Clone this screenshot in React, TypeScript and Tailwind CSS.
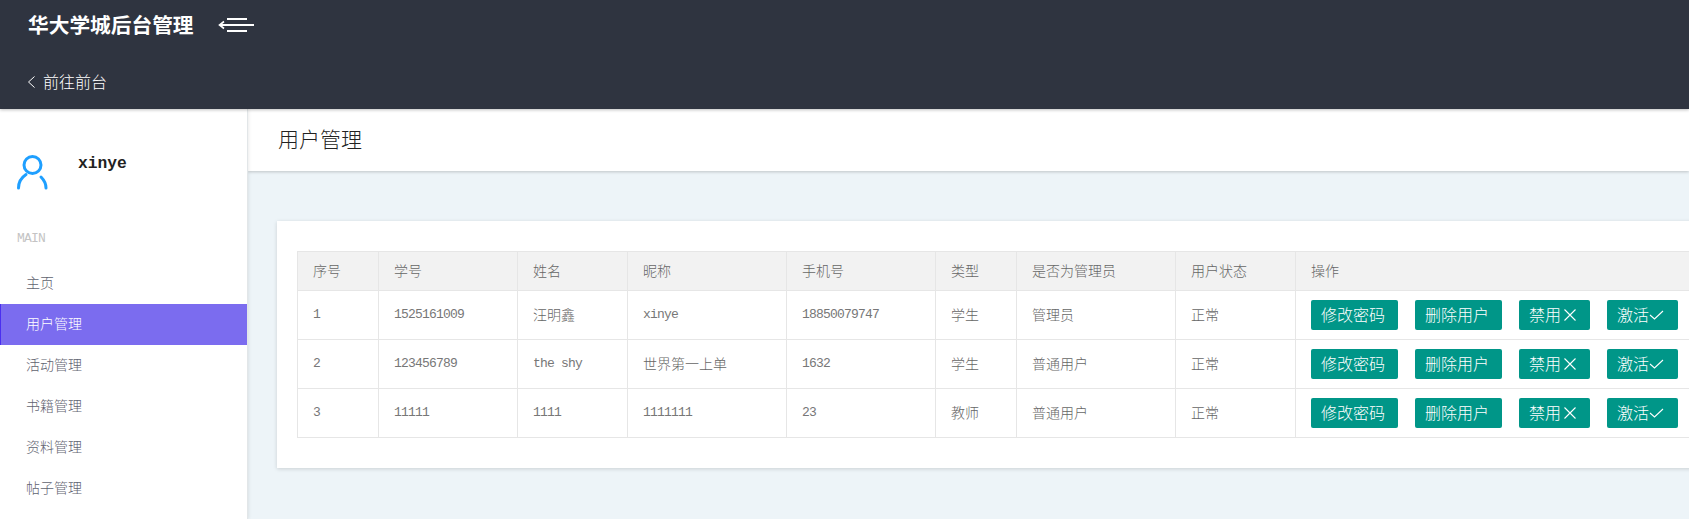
const headers = ["序号", "学号", "姓名", "昵称", "手机号", "类型", "是否为管理员", "用户状态", "操作"];
const widths = [81, 139, 110, 159, 149, 81, 159, 120, 480];
const rows = [
  ["1", "1525161009", "汪明鑫", "xinye", "18850079747", "学生", "管理员", "正常"],
  ["2", "123456789", "the shy", "世界第一上单", "1632", "学生", "普通用户", "正常"],
  ["3", "11111", "1111", "1111111", "23", "教师", "普通用户", "正常"],
];
const navItems = ["主页", "用户管理", "活动管理", "书籍管理", "资料管理", "帖子管理"];
const isLatin = (s: string) => /^[\x00-\x7f]+$/.test(s);
const cjk = "font-['Noto_Sans_CJK_SC','Liberation_Sans',sans-serif]";
const mono = "font-['Liberation_Mono','Noto_Sans_CJK_SC',monospace]";

function Btn({ w, label, children }: { w: string; label: string; children?: React.ReactNode }) {
  return (
    <button className={`${w} h-[30px] shrink-0 rounded-[2px] bg-[#009688] text-white text-[16px] font-light flex items-center justify-start pl-[10px] leading-none`}>
      <span className="mb-[2px]">{label}</span>
      {children}
    </button>
  );
}

export default function App() {
  return (
    <div className={`w-[1689px] h-[519px] overflow-hidden flex flex-col bg-white ${cjk}`}>
      <header className="h-[109px] shrink-0 bg-[#2f3440] text-white relative z-20 shadow-[0_1px_3px_rgba(0,0,0,0.25)]">
        <div className="h-[50px] flex items-center pl-[28px]">
          <span className="text-[20.7px] font-bold leading-none mb-[2px] font-['Noto_Sans_CJK_SC',serif]">华大学城后台管理</span>
          <svg className="ml-[24px]" width="36" height="16" viewBox="0 0 36 16" fill="none" stroke="white" strokeWidth="2">
            <path d="M9 2h20M2 8h34M9 14h20" />
            <path d="M6 4.5L1.5 8L6 11.5" strokeWidth="1.6" />
          </svg>
        </div>
        <div className="mt-[8px] h-[48px] flex items-center pl-[27px] text-[16px] font-light">
          <svg width="9" height="14" viewBox="0 0 9 14" fill="none" stroke="white" strokeWidth="1"><path d="M7.5 1.5L1.5 7l6 5.5" /></svg>
          <span className="ml-[7px] mb-[2px]">前往前台</span>
        </div>
      </header>
      <div className="flex flex-1 min-h-0">
        <aside className="w-[248px] shrink-0 bg-white border-r border-[#e2e6e8] pt-[46px] relative z-10 shadow-[1px_0_3px_rgba(0,0,0,0.08)]">
          <div className="flex h-[34px] pl-[17px]">
            <svg width="31" height="35" viewBox="0 0 31 35" fill="none" stroke="#1e9fff" strokeWidth="3" strokeLinecap="round">
              <circle cx="15.5" cy="10" r="8.5" />
              <path d="M1.5 33C1.5 27 4.5 22.5 9 19.5M24 22C27 25 29 29 29 33" />
            </svg>
            <span className={`ml-[30px] mt-[-1px] text-[16.3px] font-bold leading-[20px] text-[#222] ${mono}`}>xinye</span>
          </div>
          <div className={`mt-[42px] pl-[17px] text-[13px] tracking-[-0.8px] leading-[16px] text-[#c4c4c4] ${mono}`}>MAIN</div>
          <nav className="mt-[16px]">
            {navItems.map((item) => (
              <div
                key={item}
                className={
                  item === "用户管理"
                    ? "h-[41px] flex items-center pl-[25px] pb-[2px] text-[14px] font-light bg-[#7b6cef] text-white border-l border-[#4a2ff0]"
                    : "h-[41px] flex items-center pl-[26px] pb-[2px] text-[14px] font-light text-[#5f6370]"
                }
              >
                {item}
              </div>
            ))}
          </nav>
        </aside>
        <main className="flex-1 min-w-0 bg-[#edf4f8] overflow-hidden">
          <div className="h-[62px] bg-white flex items-center pl-[30px] pb-[3px] text-[21px] font-light text-[#222] shadow-[0_1px_3px_rgba(0,0,0,0.2)]">
            用户管理
          </div>
          <div className="mt-[50px] ml-[29px] w-[1500px] bg-white pt-[30px] pb-[30px] pl-[20px] shadow-[0_1px_4px_rgba(0,0,0,0.15)]">
            <table className="table-fixed border-collapse text-[14px] text-[#666] font-light" style={{ width: 1477 }}>
              <colgroup>
                {widths.map((w, i) => <col key={i} style={{ width: w }} />)}
              </colgroup>
              <thead>
                <tr className="h-[39px] bg-[#f2f2f2]">
                  {headers.map((h) => (
                    <th key={h} className="border border-[#e6e6e6] pl-[15px] pb-[2px] text-left font-light">{h}</th>
                  ))}
                </tr>
              </thead>
              <tbody>
                {rows.map((r) => (
                  <tr key={r[0]} className="h-[49px]">
                    {r.map((c, i) => (
                      <td key={i} className={`border border-[#e6e6e6] pl-[15px] ${isLatin(c) ? `${mono} text-[13px] tracking-[-0.8px] text-[#777]` : "pb-[2px]"}`}>{c}</td>
                    ))}
                    <td className="border border-[#e6e6e6] pl-[15px]">
                      <div className="flex gap-[17px]">
                        <Btn w="w-[87px]" label="修改密码" />
                        <Btn w="w-[87px]" label="删除用户" />
                        <Btn w="w-[71px]" label="禁用">
                          <svg className="ml-[2px]" width="14" height="14" viewBox="0 0 14 14" stroke="white" strokeWidth="1.1" fill="none"><path d="M1.5 1.5l11 11M12.5 1.5l-11 11" /></svg>
                        </Btn>
                        <Btn w="w-[71px]" label="激活">
                          <svg width="15" height="14" viewBox="0 0 15 14" stroke="white" strokeWidth="1.1" fill="none"><path d="M1 7l4.5 4L14 3" /></svg>
                        </Btn>
                      </div>
                    </td>
                  </tr>
                ))}
              </tbody>
            </table>
          </div>
        </main>
      </div>
    </div>
  );
}
